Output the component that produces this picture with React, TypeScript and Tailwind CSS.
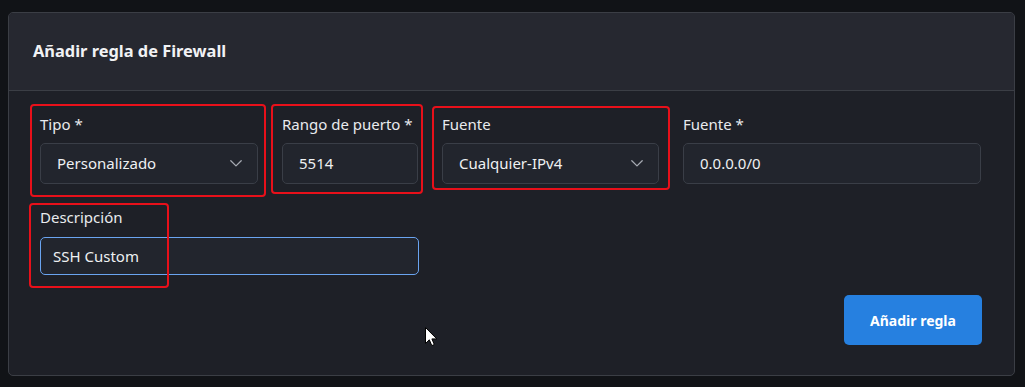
import React from "react";

const font = { fontFamily: '"Noto Sans", "Open Sans", sans-serif' };

function Chevron() {
  return (
    <svg width="12" height="7" viewBox="0 0 12 7" fill="none" className="shrink-0">
      <path d="M0.8 0.8 L6 5.9 L11.2 0.8" stroke="#a4a8b0" strokeWidth="1.3" strokeLinecap="round" strokeLinejoin="round" />
    </svg>
  );
}

function RedBox({ className }: { className: string }) {
  return <div className={`pointer-events-none absolute rounded-[4px] border-2 border-[#e8101a] ${className}`} />;
}

function Label({ children }: { children: React.ReactNode }) {
  return <div className="h-[22px] text-[15px] leading-[22px] text-[#e9ebee]">{children}</div>;
}

function Box({ children, select }: { children: React.ReactNode; select?: boolean }) {
  return (
    <div className="mt-[8px] flex h-[41px] items-center justify-between rounded-[5px] border border-[#3a3e47] bg-[#22252d] pl-[16px] pr-[15px] text-[15px] text-[#eef0f2]">
      <span>{children}</span>
      {select && <Chevron />}
    </div>
  );
}

export default function App() {
  return (
    <div className="h-[387px] w-[1025px] overflow-hidden bg-[#111317] pl-[8px] pt-[12px]" style={font}>
      <div className="h-[364px] w-[1007px] overflow-hidden rounded-[5px] border border-[#3b3e45] bg-[#1e2027]">
        <div className="flex h-[78px] items-center border-b border-[#3b3e45] bg-[#262830] pl-[24px]">
          <h1 className="text-[16.4px] font-bold text-[#f1f2f4]">Añadir regla de Firewall</h1>
        </div>
        <div className="relative px-[31px] pt-[22px]">
          <div className="flex gap-[24px]">
            <div className="relative w-[218px]">
              <Label>Tipo *</Label>
              <Box select>Personalizado</Box>
              <RedBox className="-left-[10px] -top-[9px] -right-[8px] -bottom-[13px]" />
            </div>
            <div className="relative w-[136px]">
              <Label>Rango de puerto *</Label>
              <Box>5514</Box>
              <RedBox className="-left-[11px] -top-[9px] -right-[5px] -bottom-[10px]" />
            </div>
            <div className="relative w-[217px]">
              <Label>Fuente</Label>
              <Box select>Cualquier-IPv4</Box>
              <RedBox className="-left-[10px] -top-[7px] -right-[11px] -bottom-[6px]" />
            </div>
            <div className="relative w-[298px]">
              <Label>Fuente *</Label>
              <Box>0.0.0.0/0</Box>
            </div>
          </div>
          <div className="relative mt-[22px] w-[379px]">
            <Label>Descripción</Label>
            <div className="mt-[9px] flex h-[38px] items-center rounded-[5px] border border-[#6aa4f0] bg-[#22252d] pl-[12px] text-[15px] text-[#eef0f2]">
              SSH Custom
            </div>
            <RedBox className="-left-[11px] -top-[3px] right-[250px] -bottom-[13px]" />
          </div>
          <div className="mt-[20px] flex justify-end pr-[1px]">
            <button className="h-[50px] w-[138px] rounded-[5px] bg-[#2680e0] text-[14px] font-bold text-white">
              Añadir regla
            </button>
          </div>
          <svg className="absolute left-[416px] top-[236px]" width="13" height="20" viewBox="0 0 13 20">
            <path d="M0.5 0.5 L0.5 16.5 L4.3 12.8 L6.8 18.6 L9.3 17.5 L6.9 11.9 L11.8 11.9 Z" fill="#fff" stroke="#000" strokeWidth="1" strokeLinejoin="miter" />
          </svg>
        </div>
      </div>
    </div>
  );
}
